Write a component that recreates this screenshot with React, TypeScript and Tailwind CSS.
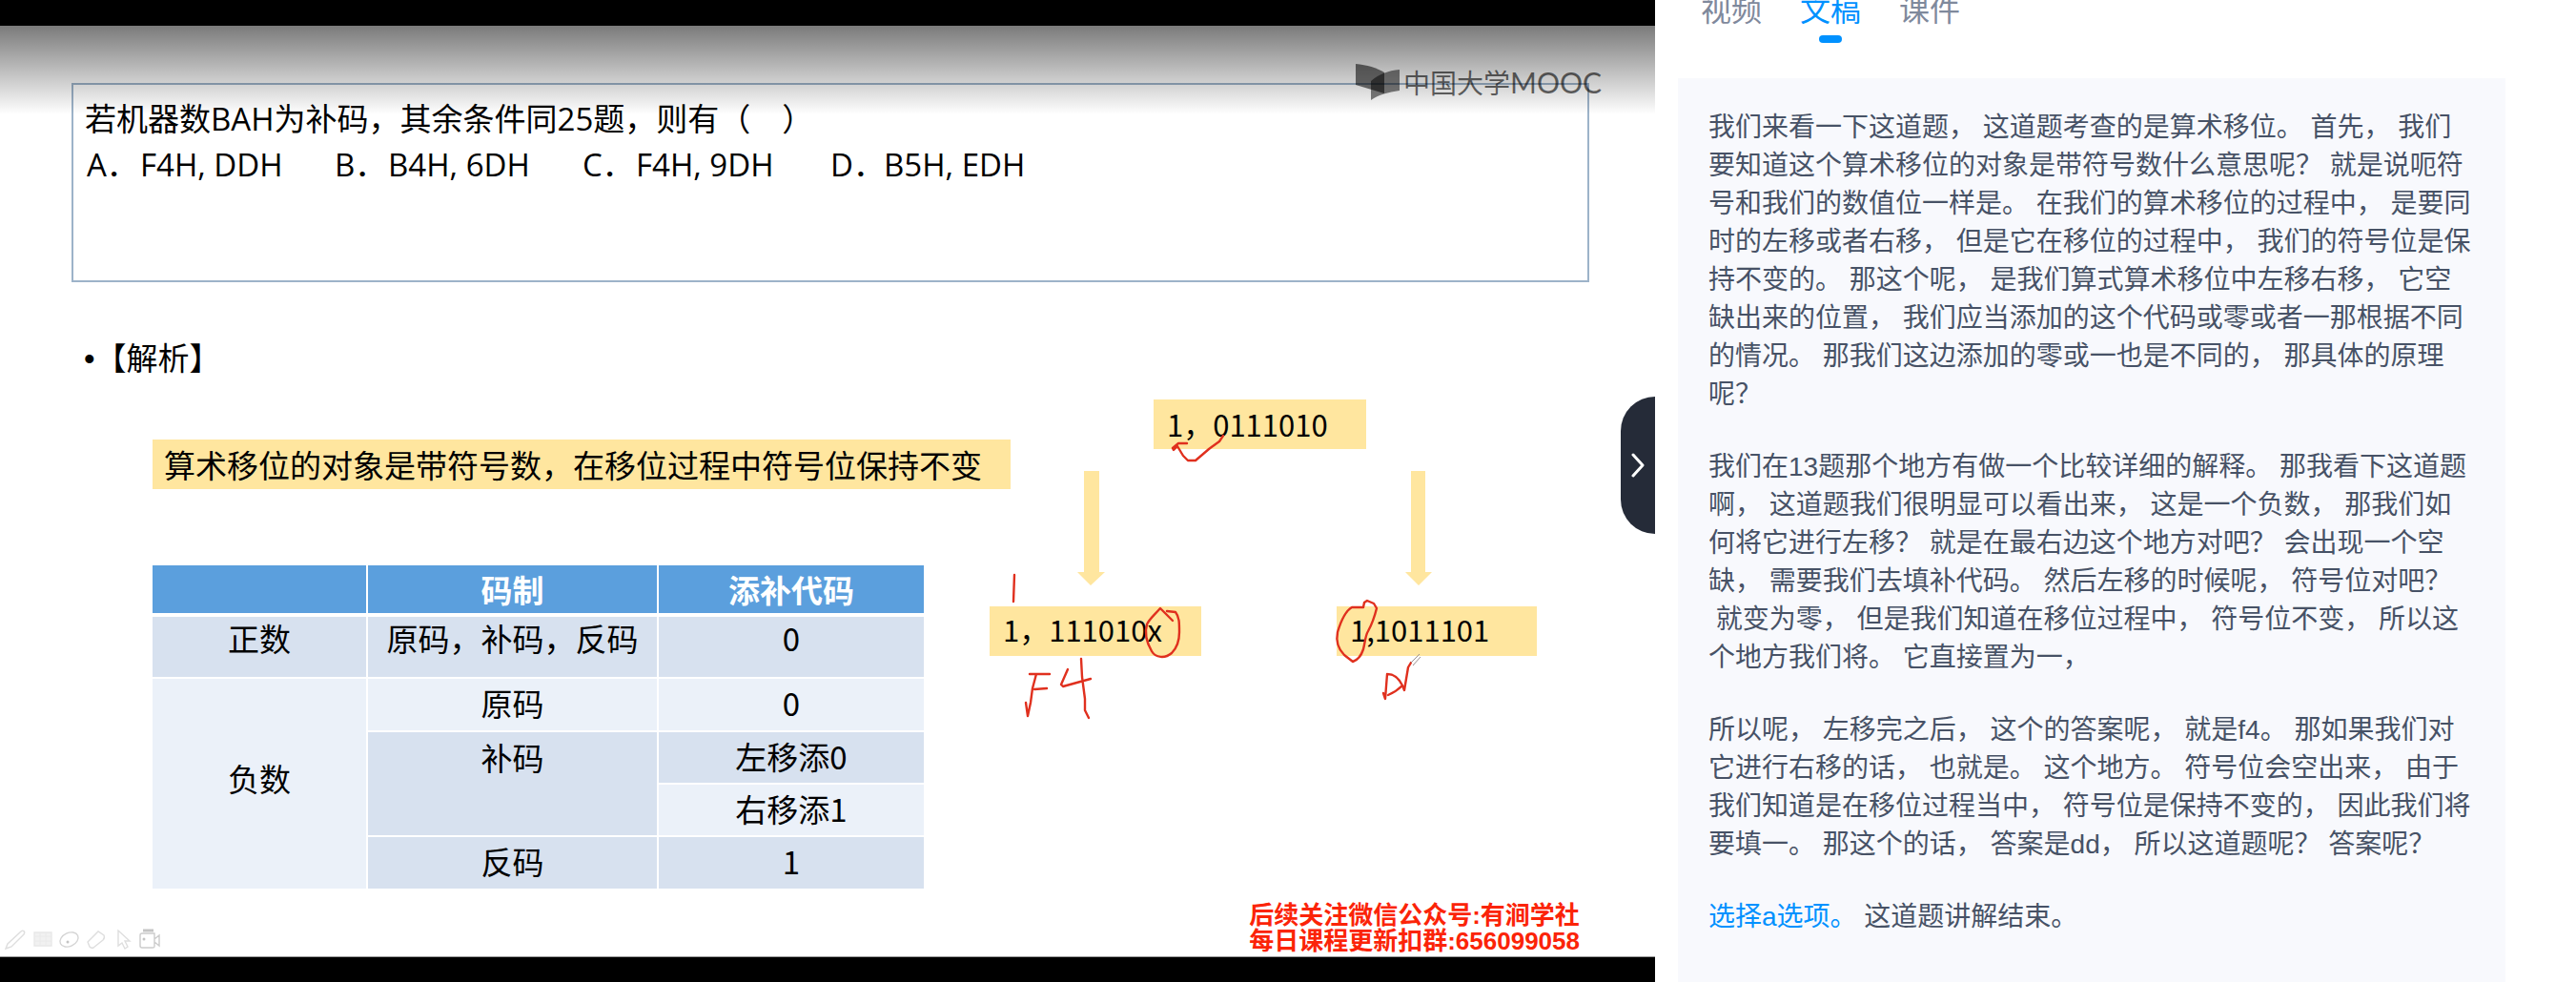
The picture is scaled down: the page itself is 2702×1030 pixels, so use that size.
import React from "react";

const options = [
  { label: "A．", value: "F4H, DDH" },
  { label: "B．", value: "B4H, 6DH" },
  { label: "C．", value: "F4H, 9DH" },
  { label: "D．", value: "B5H, EDH" },
];

const tabs = ["视频", "文稿", "课件"];

function Watermark() {
  return (
    <div className="absolute top-[40px] right-[56px] flex items-center gap-1 whitespace-nowrap text-black/60">
      <svg width="46" height="38" viewBox="0 0 46 38" aria-hidden="true">
        <path d="M0 0C12 1 22 4 30 9V31L0 22Z" fill="#000" opacity="0.55" />
        <path d="M46 6C34 7 24 11 16 18V38C24 32 34 30 46 28Z" fill="#000" opacity="0.5" />
      </svg>
      <span className="flex items-center text-[28px] leading-9">
        中国大学
        <span className="font-[Lato] text-[30px]">MOOC</span>
      </span>
    </div>
  );
}

function ShiftDiagram() {
  return (
    <div className="relative -ml-6 h-[380px] w-[620px] shrink-0 text-[31px]">
      <div className="absolute top-[18px] left-[174px] h-[52px] w-[223px] bg-[#ffe69f] pl-[14px] leading-[51px]">1，0111010</div>
      <div className="absolute top-[235px] left-[2px] h-[52px] w-[222px] bg-[#ffe69f] pl-[14px] leading-[48px]">1，111010x</div>
      <div className="absolute top-[235px] left-[366px] h-[52px] w-[210px] bg-[#ffe69f] pl-[14px] leading-[48px]">1,1011101</div>
      <svg className="absolute inset-0" width="620" height="380" viewBox="0 0 620 380" fill="none" aria-hidden="true">
        <path d="M101 93h16v106h6l-15 14-14-14h7z" fill="#ffe69f" />
        <path d="M444 93h15v106h7l-14 14-14-14h6z" fill="#ffe69f" />
        <g stroke="#e0301e" strokeWidth="2.4" strokeLinecap="round" strokeLinejoin="round">
          <path d="M28 202L27 230" />
          <path d="M247 56L243 62 232 70 218 82H210L205 77 199 67 195 71 194 69 200 64H209" />
          <path d="M194 250L181 237C174 245 169 249 167 254C164 264 168 275 172 282C176 289 186 290 193 284C199 278 201 270 201 262C201 252 201 246 197 241L188 240" />
          <path d="M44 306H65M51 306L47 321 45 336 42 350 40 336M49 322L62 321" />
          <path d="M84 301L77 317 79 319 108 311M98 290L99 309 102 332V344L106 352" />
          <path d="M394 236H382C375 240 370 252 367 262C365 272 368 280 374 286L383 293C389 291 392 286 394 280C396 272 396 266 399 261C404 252 406 245 408 237L405 232 398 229 395 231 394 236" />
          <path d="M419 306L417 332 415 326M419 306C428 306 432 312 435 318C430 323 427 325 420 328M435 318L437 323 441 299 444 294" />
        </g>
        <path d="M444 294L453 285M446 297L454 288" stroke="#9b8f8f" />
      </svg>
    </div>
  );
}

function FillTable() {
  return (
    <table className="mt-20 w-[809px] table-fixed border-collapse text-center text-[33px] leading-[44px]">
      <colgroup>
        <col className="w-[225px]" />
        <col className="w-[305px]" />
        <col />
      </colgroup>
      <thead>
        <tr className="h-[52px] bg-[#5b9fdd] text-white">
          <th className="border-r-2 border-b-4 border-white" aria-label="符号" />
          <th className="border-r-2 border-b-4 border-white p-0 font-bold">码制</th>
          <th className="border-b-4 border-white p-0 font-bold">添补代码</th>
        </tr>
      </thead>
      <tbody className="bg-[#d7e1ef]">
        <tr className="h-[66px] align-top">
          <td className="border-r-2 border-b-2 border-white">正数</td>
          <td className="border-r-2 border-b-2 border-white">原码，补码，反码</td>
          <td className="border-b-2 border-white">0</td>
        </tr>
        <tr className="h-[56px] bg-[#ebf1f9]">
          <td rowSpan={4} className="border-r-2 border-white pb-3">负数</td>
          <td className="border-r-2 border-b-2 border-white pb-1">原码</td>
          <td className="border-b-2 border-white pb-1">0</td>
        </tr>
        <tr className="h-[55px]">
          <td rowSpan={2} className="border-r-2 border-b-2 border-white pt-1 align-top">补码</td>
          <td className="border-b-2 border-white pb-1">左移添0</td>
        </tr>
        <tr className="h-[55px]">
          <td className="border-b-2 border-white bg-[#ebf1f9] pb-1">右移添1</td>
        </tr>
        <tr className="h-[55px]">
          <td className="border-r-2 border-white pb-1">反码</td>
          <td className="pb-1">1</td>
        </tr>
      </tbody>
    </table>
  );
}

function PenTools() {
  return (
    <svg width="168" height="26" viewBox="0 0 168 26" fill="none" stroke="#dedede" strokeWidth="1.4" aria-hidden="true">
      <path d="M6 22L8 17 22 4C24 2 27 4 25 7L12 20Z" />
      <path d="M36 5H54V19H36Z" fill="#f1f1f1" stroke="#e8e8e8" />
      <path d="M36 9H54M36 14H54M42 5V19M48 5V19" stroke="#eaeaea" strokeWidth="1" />
      <ellipse cx="72.500" cy="12.500" rx="10" ry="7" transform="rotate(-25 72.500 12.500)" stroke="#d4d4d4" />
      <circle cx="71" cy="15" r="1.500" fill="#c4c4c4" stroke="none" />
      <path d="M92 15L103 4 109 8C110 10 109 12 108 13L98 21Q96 22 94 20Z" />
      <path d="M124 3V19L128 16 131 22 134 20 131 14H136Z" />
      <path d="M149 6H162V20Q162 21 160 21H149Q147 21 147 19V8Q147 6 149 6ZM162 12L167 8V19L162 15" stroke="#cccccc" />
      <path d="M150 3H161" stroke="#c4c4c4" strokeWidth="3" />
      <circle cx="151" cy="12" r="1.500" fill="#c4c4c4" stroke="none" />
    </svg>
  );
}

function Slide() {
  return (
    <div className="relative flex flex-1 flex-col border-b border-[#999] bg-white text-black">
      <section className="mt-[60px] mr-[69px] ml-[75px] h-[209px] border-2 border-[#9db3c9] px-3 pt-3 font-['Open_Sans','Noto_Sans_CJK_SC',sans-serif] text-[33px] leading-[48px]">
        <p className="whitespace-pre">若机器数BAH为补码，其余条件同25题，则有（&#8195;）</p>
        <ul className="flex pl-[2px]">
          {options.map((o) => (
            <li key={o.label} className="flex w-[260px] whitespace-nowrap">
              <span className="w-14">{o.label}</span>
              <span>{o.value}</span>
            </li>
          ))}
        </ul>
      </section>
      <h2 className="mt-[54px] ml-[88px] text-[33px] leading-[48px]">
        <span className="font-['Liberation_Sans']">•</span>【解析】
      </h2>
      <div className="flex pl-40">
        <div className="w-[900px] shrink-0">
          <p className="mt-[60px] bg-[#ffe69f] pl-3 text-[33px] leading-[52px] whitespace-nowrap">
            算术移位的对象是带符号数，在移位过程中符号位保持不变
          </p>
          <FillTable />
        </div>
        <ShiftDiagram />
      </div>
      <div className="mt-auto flex items-end justify-between pr-[79px]">
        <div className="mb-1">
          <PenTools />
        </div>
        <p className="mb-[2px] font-['Liberation_Sans','Noto_Sans_CJK_SC',sans-serif] text-[26px] leading-[27px] font-bold text-[#fb2408]">
          后续关注微信公众号:有涧学社
          <br />
          每日课程更新扣群:656099058
        </p>
      </div>
      <div className="pointer-events-none absolute inset-x-0 top-0 h-[93px] bg-linear-to-b from-black/52 to-transparent" />
      <Watermark />
    </div>
  );
}

function Transcript() {
  return (
    <article className="mr-[74px] ml-6 flex-1 space-y-9 bg-[#f8f9fd] px-8 pt-8 text-[28px] leading-10 text-[#475266]">
      <p>
        我们来看一下这道题， 这道题考查的是算术移位。 首先， 我们要知道这个算术移位的对象是带符号数什么意思呢？ 就是说呃符号和我们的数值位一样是。 在我们的算术移位的过程中， 是要同时的左移或者右移， 但是它在移位的过程中， 我们的符号位是保持不变的。 那这个呢， 是我们算式算术移位中左移右移， 它空缺出来的位置， 我们应当添加的这个代码或零或者一那根据不同的情况。 那我们这边添加的零或一也是不同的， 那具体的原理呢？
      </p>
      <p>
        我们在13题那个地方有做一个比较详细的解释。 那我看下这道题啊， 这道题我们很明显可以看出来， 这是一个负数， 那我们如何将它进行左移？ 就是在最右边这个地方对吧？ 会出现一个空缺， 需要我们去填补代码。 然后左移的时候呢， 符号位对吧？
        <br />
        &nbsp;就变为零， 但是我们知道在移位过程中， 符号位不变， 所以这个地方我们将。 它直接置为一，
      </p>
      <p>
        所以呢， 左移完之后， 这个的答案呢， 就是f4。 那如果我们对它进行右移的话， 也就是。 这个地方。 符号位会空出来， 由于我们知道是在移位过程当中， 符号位是保持不变的， 因此我们将要填一。 那这个的话， 答案是dd， 所以这道题呢？ 答案呢？
      </p>
      <p>
        <span className="text-[#0091ff]">选择a选项。</span> 这道题讲解结束。
      </p>
    </article>
  );
}

export default function App() {
  return (
    <div className="flex min-h-screen bg-white font-['Liberation_Sans','Noto_Sans_CJK_SC',sans-serif]">
      <main className="relative flex min-w-0 flex-1 flex-col bg-black pt-[27px] pb-[26px] font-['Noto_Sans_CJK_SC',sans-serif]">
        <Slide />
        <button
          type="button"
          aria-label="收起侧栏"
          className="absolute top-[416px] right-0 flex h-36 w-9 items-center justify-center rounded-l-[36px] bg-[#252b38] text-white"
        >
          <svg width="14" height="26" viewBox="0 0 14 26" fill="none" stroke="currentColor" strokeWidth="3" strokeLinecap="round" strokeLinejoin="round" aria-hidden="true">
            <path d="M2 2L12 13L2 24" />
          </svg>
        </button>
      </main>
      <aside className="flex w-[966px] shrink-0 flex-col">
        <nav role="tablist" className="-mt-[11px] mb-[37px] flex gap-10 pl-12 text-[32px] leading-[45px]">
          {tabs.map((t) => {
            const active = t === "文稿";
            return (
              <button
                key={t}
                type="button"
                role="tab"
                aria-selected={active}
                className={active ? "flex flex-col items-center gap-[3px] text-[#0091ff]" : "flex flex-col items-center gap-[3px] text-[#7f899c]"}
              >
                {t}
                <span className={active ? "h-2 w-6 rounded bg-[#0091ff]" : "h-2 w-6"} />
              </button>
            );
          })}
        </nav>
        <Transcript />
      </aside>
    </div>
  );
}
